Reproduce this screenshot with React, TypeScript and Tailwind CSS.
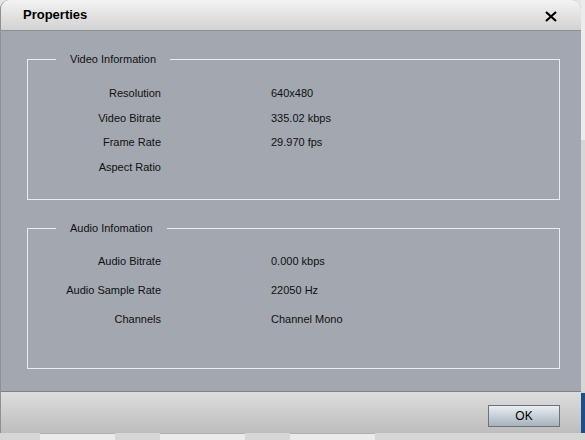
import React from "react";

type Row = { label: string; value: string };

const VIDEO_ROWS: Row[] = [
  { label: "Resolution", value: "640x480" },
  { label: "Video Bitrate", value: "335.02 kbps" },
  { label: "Frame Rate", value: "29.970 fps" },
  { label: "Aspect Ratio", value: "" },
];

const AUDIO_ROWS: Row[] = [
  { label: "Audio Bitrate", value: "0.000 kbps" },
  { label: "Audio Sample Rate", value: "22050 Hz" },
  { label: "Channels", value: "Channel Mono" },
];

const GroupBox: React.FC<{
  title: string;
  rows: Row[];
  rowHeight: string;
  padTop: string;
}> = ({ title, rows, rowHeight, padTop }) => (
  <fieldset className="h-[148px] border border-[#e9ecf0] px-[28px] m-0">
    <legend className="px-[14px] text-[11px] leading-[14px] text-[#111]">
      {title}
    </legend>
    <div className={`flex flex-col ${padTop}`}>
      {rows.map((row) => (
        <div key={row.label} className={`flex items-center ${rowHeight}`}>
          <div className="w-[105px] text-right">{row.label}</div>
          <div className="ml-[110px]">{row.value}</div>
        </div>
      ))}
    </div>
  </fieldset>
);

export default function App() {
  return (
    <div
      className="w-[585px] h-[440px] bg-[#e6e6e6] flex flex-col text-[11px] text-[#111]"
      style={{ fontFamily: "'Liberation Sans', Arial, sans-serif" }}
    >
      <div className="flex flex-1">
        {/* Dialog */}
        <div className="w-[581px] h-[433px] flex flex-col rounded-t-[9px] overflow-hidden border-l border-[#8d9097] bg-[#a2a7b0]">
          {/* Title bar */}
          <div className="h-[31px] shrink-0 flex items-center justify-between pl-[22px] pr-[24px] bg-gradient-to-b from-[#f3f3f3] to-[#d2d2d2] border-b border-[#8a8e96]">
            <span className="text-[13px] font-bold text-black">Properties</span>
            <svg width="12" height="11" viewBox="0 0 12 11" className="mt-[3px]">
              <path d="M1 1 L11 10 M11 1 L1 10" stroke="#000" strokeWidth="2.2" />
            </svg>
          </div>

          {/* Body */}
          <div className="flex-1 flex flex-col gap-[21px] pl-[26px] pr-[21px] pt-[21px]">
            <GroupBox
              title="Video Information"
              rows={VIDEO_ROWS}
              rowHeight="h-[24.5px]"
              padTop="pt-[15px]"
            />
            <GroupBox
              title="Audio Infomation"
              rows={AUDIO_ROWS}
              rowHeight="h-[29px]"
              padTop="pt-[12px]"
            />
          </div>

          {/* Button bar */}
          <div className="h-[42px] shrink-0 flex items-start justify-end pr-[21px] pt-[13px] border-t border-[#7e8188] bg-gradient-to-b from-[#dddddd] to-[#bdbdbd]">
            <button className="w-[72px] h-[22px] border border-[#6d727a] bg-gradient-to-b from-[#e9eef3] to-[#a8b2bc] text-[12px] text-black">
              OK
            </button>
          </div>
        </div>
        <div className="flex-1 flex flex-col">
          <div className="h-[140px] bg-[#ececec]" />
          <div className="flex-1 bg-[#d6d6d6]" />
          <div className="h-[40px] bg-[#1f4e8c]" />
        </div>
      </div>
      <div className="h-[7px] flex gap-[45px] pl-[40px] bg-[#d6d6d6]">
        <div className="w-[75px] h-full bg-[#ebebeb] border-t border-[#b0b0b0]" />
        <div className="w-[85px] h-full bg-[#ebebeb] border-t border-[#b0b0b0]" />
        <div className="w-[85px] h-full bg-[#ebebeb] border-t border-[#b0b0b0]" />
      </div>
    </div>
  );
}
